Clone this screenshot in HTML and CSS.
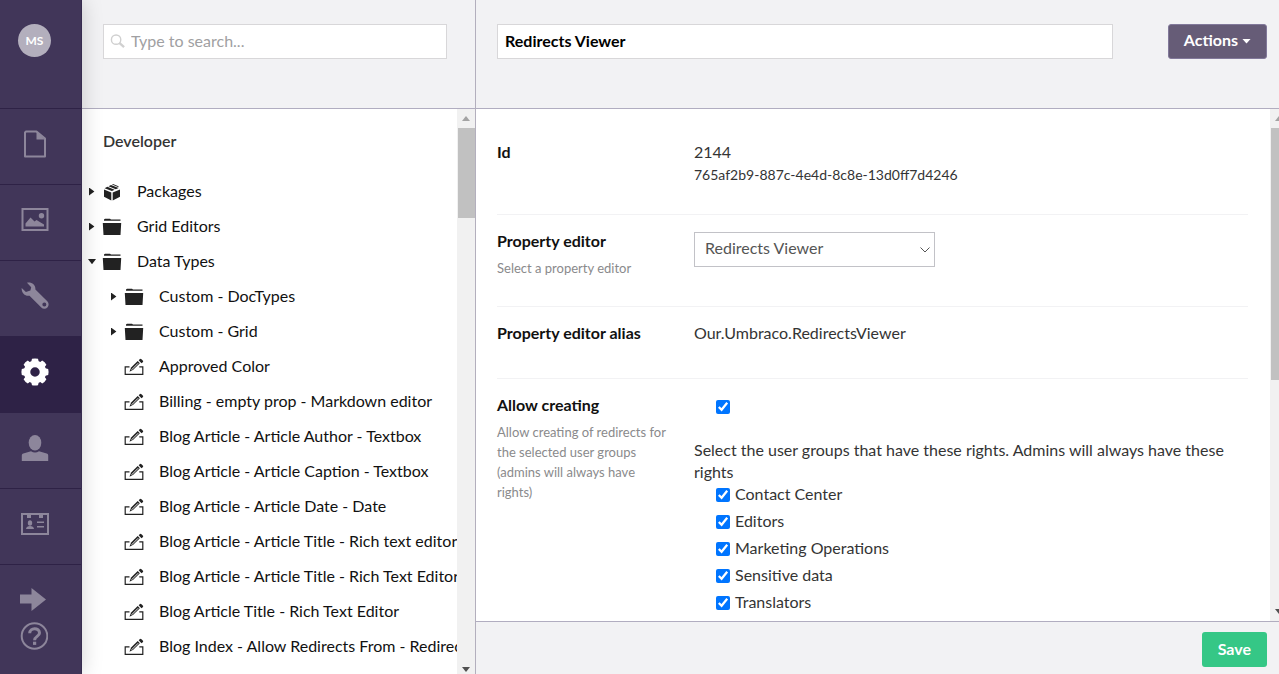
FILE: index.html
```html
<!DOCTYPE html>
<html lang="en">
<head>
<meta charset="utf-8">
<title>Redirects Viewer - Developer</title>
<link rel="stylesheet" href="styles.css">
</head>
<body>
<svg class="defs" aria-hidden="true">
  <symbol id="folder" viewBox="0 0 20 18"><path d="M2 3.500V1.500L3 .8h5l1 .8h9.500v1.200H2zM.8 5h18.400l-.7 12H1.500z"/></symbol>
  <symbol id="edit" viewBox="0 0 20 18"><path d="M5.500 8.800H1.200v7.500h17.600V8.800h-3.500" fill="none" stroke="currentColor" stroke-width="1.200"/><path d="M5.500 13.800l1.600-4.200 6.600-6.600 2.200 2.200-6.700 6.600z"/><path d="M7.600 11.800l6.600-6.600" stroke="#fff" stroke-width=".9"/><path d="M14.700 2.300l1.500-1.500 1.300.4 1.700 1.700-.2 1-1.500 1.300z"/></symbol>
</svg>
<div class="app">
  <nav class="rail" aria-label="Sections">
    <div class="rail-user"><button class="avatar" type="button">MS</button></div>
    <a class="rail-item" href="#" aria-label="Content"><svg viewBox="0 0 28 28"><path d="M5 1.500h10.500l8.500 7v18H4v-24z" fill="none" stroke="currentColor" stroke-width="2" stroke-linejoin="round"/><path d="M15.500 1v8.500H24z"/></svg></a>
    <a class="rail-item" href="#" aria-label="Media"><svg viewBox="0 0 28 28"><path d="M1.500 3h25v21h-25z" fill="none" stroke="currentColor" stroke-width="2"/><circle cx="20.500" cy="9.800" r="2.700"/><path d="M4.500 20.500v-3l5-6 4 4 2-1.500 7.500 4.500v2z"/></svg></a>
    <a class="rail-item" href="#" aria-label="Settings"><svg viewBox="0 0 28 28"><path fill-rule="evenodd" d="M6 .7c5-.8 8.800 2.400 8.400 6.900l11.900 11.700a4.300 4.300 0 0 1-6 6.200L8.500 13.700C4 14.500.2 11 .7 5.900l4.200 4.200 4.500-1.500.8-3.300zM23.300 20.500a2 2 0 1 0 .1 4 2 2 0 0 0-.1-4z"/></svg></a>
    <a class="rail-item active" href="#" aria-label="Developer" aria-current="page"><svg viewBox="0 0 28 28"><circle cx="14" cy="14" r="8" fill="none" stroke="currentColor" stroke-width="6.500"/><path d="M11 .8q3-.8 6 0l1 4h-8zM11 27.200q3 .8 6 0l1-4h-8zM.8 11q-.8 3 0 6l4 1v-8zM27.200 11q.8 3 0 6l-4 1v-8zM2.600 6.800q1.400-2.800 4.200-4.200l3.200 2.400-5 5zM25.400 6.800q-1.400-2.800-4.200-4.200L18 5l5 5zM2.600 21.200q1.400 2.800 4.200 4.200l3.200-2.400-5-5zM25.400 21.200q-1.400 2.800-4.200 4.200L18 23l5-5z"/></svg></a>
    <a class="rail-item" href="#" aria-label="Users"><svg viewBox="0 0 28 28"><ellipse cx="14" cy="8.700" rx="6.300" ry="7.700"/><path d="M.8 27v-5.500c0-1 .5-1.500 1.500-1.900L10 17.200c2.600 1.600 5.400 1.600 8 0l7.700 2.400c1 .4 1.500.9 1.500 1.900V27z"/></svg></a>
    <a class="rail-item" href="#" aria-label="Members"><svg viewBox="0 0 28 28"><path d="M1 4h26v20H1z" fill="none" stroke="currentColor" stroke-width="2"/><path d="M6 4h4v4H6zM18 4h4v4h-4z"/><ellipse cx="9" cy="13" rx="2.200" ry="2.800"/><path d="M5 19c0-2 2-3 4-3s4 1 4 3zM16 11.500h7v1.600h-7zM16 16h7v1.600h-7z"/></svg></a>
    <div class="rail-end">
      <a href="#" aria-label="More"><svg viewBox="0 0 28 28"><path d="M0 9.500h11.500V3L26 14.500 11.500 26v-7.500H0z"/></svg></a>
      <a href="#" aria-label="Help"><svg viewBox="0 0 28 28"><circle cx="14.500" cy="14" r="12.800" fill="none" stroke="currentColor" stroke-width="2"/><path d="M9.700 11.300c0-6.300 9.800-6 9.800-.4 0 3.600-4.900 3.400-4.900 7.300" fill="none" stroke="currentColor" stroke-width="3"/><path d="M13 19.700h3.200v3.200H13z"/></svg></a>
    </div>
  </nav>

  <aside class="tree-pane">
    <header class="pane-head">
      <label class="search"><svg viewBox="0 0 16 16" aria-hidden="true"><circle cx="6.500" cy="6" r="5" fill="none" stroke="currentColor" stroke-width="1.500"/><path d="M10 9.500l5 4.500" stroke="currentColor" stroke-width="2.500"/></svg><input type="text" placeholder="Type to search..." aria-label="Search"></label>
    </header>
    <div class="pane-body">
      <div class="tree">
        <h2>Developer</h2>
        <ul>
          <li><i class="caret"></i><svg class="icon" viewBox="0 0 20 18"><path d="M2 6.500l7.300 3v8L2 13.800zM18 6.500l-7.300 3v8l7.300-3.700zM2.600 5.200l2.800-1.400 7.200 3-2.700 1.200zM6.500 3.300L9 2l7.600 3-2.800 1.300zM10 1.500L11 1l5.500 2.300v.9z"/></svg><a href="#">Packages</a></li>
          <li><i class="caret"></i><svg class="icon"><use href="#folder"/></svg><a href="#">Grid Editors</a></li>
          <li><i class="caret open"></i><svg class="icon"><use href="#folder"/></svg><a href="#">Data Types</a></li>
          <li class="sub"><i class="caret"></i><svg class="icon"><use href="#folder"/></svg><a href="#">Custom - DocTypes</a></li>
          <li class="sub"><i class="caret"></i><svg class="icon"><use href="#folder"/></svg><a href="#">Custom - Grid</a></li>
          <li class="sub"><i class="caret none"></i><svg class="icon"><use href="#edit"/></svg><a href="#">Approved Color</a></li>
          <li class="sub"><i class="caret none"></i><svg class="icon"><use href="#edit"/></svg><a href="#">Billing - empty prop - Markdown editor</a></li>
          <li class="sub"><i class="caret none"></i><svg class="icon"><use href="#edit"/></svg><a href="#">Blog Article - Article Author - Textbox</a></li>
          <li class="sub"><i class="caret none"></i><svg class="icon"><use href="#edit"/></svg><a href="#">Blog Article - Article Caption - Textbox</a></li>
          <li class="sub"><i class="caret none"></i><svg class="icon"><use href="#edit"/></svg><a href="#">Blog Article - Article Date - Date</a></li>
          <li class="sub"><i class="caret none"></i><svg class="icon"><use href="#edit"/></svg><a href="#">Blog Article - Article Title - Rich text editor</a></li>
          <li class="sub"><i class="caret none"></i><svg class="icon"><use href="#edit"/></svg><a href="#">Blog Article - Article Title - Rich Text Editor</a></li>
          <li class="sub"><i class="caret none"></i><svg class="icon"><use href="#edit"/></svg><a href="#">Blog Article Title - Rich Text Editor</a></li>
          <li class="sub"><i class="caret none"></i><svg class="icon"><use href="#edit"/></svg><a href="#">Blog Index - Allow Redirects From - Redirects</a></li>
        </ul>
      </div>
      <div class="scrollbar" aria-hidden="true"><i class="arrow up"></i><i class="thumb"></i><i class="arrow down"></i></div>
    </div>
  </aside>

  <main class="editor">
    <header class="pane-head">
      <input class="title" type="text" value="Redirects Viewer" aria-label="Name">
      <button class="btn actions" type="button">Actions <i></i></button>
    </header>
    <div class="pane-body">
      <div class="form">
        <section class="row tall">
          <div class="label"><h3>Id</h3></div>
          <div class="value"><div>2144</div><small>765af2b9-887c-4e4d-8c8e-13d0ff7d4246</small></div>
        </section>
        <section class="row tall">
          <div class="label"><label for="editor">Property editor</label><p>Select a property editor</p></div>
          <div class="value"><div class="select"><select id="editor"><option>Redirects Viewer</option></select><svg viewBox="0 0 10 6" aria-hidden="true"><path d="M.5.5L5 5 9.500.5" fill="none" stroke="currentColor"/></svg></div></div>
        </section>
        <section class="row">
          <div class="label"><h3>Property editor alias</h3></div>
          <div class="value">Our.Umbraco.RedirectsViewer</div>
        </section>
        <section class="row">
          <div class="label"><label for="allow">Allow creating</label><p>Allow creating of redirects for the selected user groups (admins will always have rights)</p></div>
          <div class="value">
            <div class="allow"><input id="allow" type="checkbox" checked></div>
            <p>Select the user groups that have these rights. Admins will always have these rights</p>
            <div class="groups">
              <label><input type="checkbox" checked>Contact Center</label>
              <label><input type="checkbox" checked>Editors</label>
              <label><input type="checkbox" checked>Marketing Operations</label>
              <label><input type="checkbox" checked>Sensitive data</label>
              <label><input type="checkbox" checked>Translators</label>
            </div>
          </div>
        </section>
      </div>
      <div class="scrollbar cut" aria-hidden="true"><i class="arrow up"></i><i class="thumb long"></i><i class="arrow down"></i></div>
    </div>
    <footer><button class="btn save" type="button">Save</button></footer>
  </main>
</div>
</body>
</html>
```
FILE: styles.css
```css
* { box-sizing: border-box; margin: 0; padding: 0; }
body { font: 16px/22px Lato, "Liberation Sans", sans-serif; color: #343434; background: #fff; }
a { color: inherit; text-decoration: none; }
ul { list-style: none; }
input, select, button { font: inherit; color: inherit; }
svg { fill: currentColor; flex: none; }
.defs { position: absolute; width: 0; height: 0; }
.app { display: grid; grid-template-columns: 82px 394px minmax(0, 1fr); height: 100vh; overflow: hidden; }

.rail { display: flex; flex-direction: column; background: #413659; color: #8d869b; border-right: 1px solid #372c4f; z-index: 1; box-shadow: 0 0 20px rgba(0, 0, 0, .18); }
.rail-user { height: 108px; padding: 24px 18px; }
.avatar { width: 33px; height: 33px; border: 0; border-radius: 50%; background: #b3afbd; color: #fff; font-size: 12px; font-weight: 700; }
.rail-item { display: flex; align-items: center; height: 76px; padding: 0 0 6px 21px; border-top: 1px solid #2e2246; }
.rail svg { width: 28px; height: 28px; }
.rail-item.active { background: #2e2246; color: #fff; }
.rail-end { display: flex; flex-direction: column; gap: 9px; padding: 20px 20px 0; border-top: 1px solid #2e2246; flex: 1; }
.rail-end a, .rail-end svg { display: block; }

.tree-pane, .editor { display: flex; flex-direction: column; min-width: 0; min-height: 0; }
.tree-pane { border-right: 1px solid #b3afbd; }
.pane-head { display: flex; justify-content: space-between; align-items: flex-start; flex: none; height: 109px; padding: 24px 12px 0 21px; background: #f2f2f4; border-bottom: 1px solid #b1adc0; }
.tree-pane .pane-head { padding-right: 28px; }
.pane-body { display: flex; flex: 1; min-height: 0; overflow: hidden; }

.search { display: flex; align-items: center; flex: 1; height: 35px; padding: 0 6px; gap: 6px; background: #fff; border: 1px solid #d8d7d9; color: #d0d0d0; }
.search svg { width: 15px; height: 15px; }
.search input { flex: 1; min-width: 0; border: 0; outline: 0; background: none; color: #343434; padding-bottom: 2px; }
.search input::placeholder { color: #a0a0a2; opacity: 1; }

.tree { flex: 1; min-width: 0; overflow: hidden; padding-top: 21px; color: #111; }
.tree h2 { font-size: 16px; line-height: 22px; font-weight: 600; color: #343434; padding-left: 21px; margin-bottom: 21px; }
.tree li { display: flex; align-items: center; height: 35px; padding-left: 7px; white-space: nowrap; }
.tree li.sub { padding-left: 29px; }
.caret { flex: none; width: 6px; height: 8px; margin-top: 2px; background: #222; clip-path: polygon(0 0, 90% 50%, 0 100%); }
.caret.open { width: 8px; margin: 2px -1px 0; clip-path: polygon(0 20%, 100% 20%, 50% 85%); }
.caret.none { visibility: hidden; }
.icon { width: 20px; height: 18px; margin: 3px 15px 0 7px; color: #222; }

.scrollbar { display: flex; flex-direction: column; align-items: center; flex: none; width: 18px; background: #f1f1f1; padding: 7px 0 2px; }
.arrow { width: 8px; height: 5px; flex: none; background: #a3a3a3; clip-path: polygon(0 100%, 50% 0, 100% 100%); }
.arrow.down { margin-top: auto; background: #505050; clip-path: polygon(0 0, 100% 0, 50% 100%); }
.thumb { width: 17px; height: 90px; margin-top: 7px; background: #c1c1c1; flex: none; }
.thumb.long { height: 252px; }
.scrollbar.cut { margin-right: -9px; padding-bottom: 7px; }

.title { width: 80%; height: 35px; padding: 0 7px 3px; background: #fff; border: 1px solid #d8d7d9; color: #000; font-weight: 700; outline: 0; }
.btn { height: 35px; padding: 0 15px 3px; border: 0; border-radius: 3px; color: #fff; font-weight: 700; }
.actions { display: flex; align-items: center; gap: 4px; background: #665c77; border: 1px solid #82799a; }
.actions i { width: 9px; height: 5px; margin-top: 2px; background: #fff; clip-path: polygon(0 0, 100% 0, 50% 100%); }
.save { padding: 0 16px 2px; background: #35c786; }

.form { flex: 1; min-width: 0; padding: 17px 22px 0 21px; overflow: hidden; }
.row { display: flex; gap: 22px; min-height: 72px; padding: 15px 0; border-bottom: 1px solid #f2f2f4; }
.row.tall { min-height: 92px; }
.row.tall:first-child { min-height: 89px; }
.row:last-child { border: 0; }
.label { width: 175px; flex: none; }
.label h3, .label label { display: block; font-size: 16px; font-weight: 700; color: #111; }
.label p { font-size: 13px; line-height: 20px; color: #8a8a8c; margin-top: 6px; }
.value { flex: 1; min-width: 0; }
.value small { display: block; font-size: 14px; margin-top: 1px; }
.select { display: flex; align-items: center; width: 241px; margin-top: 2px; }
.select select { appearance: none; width: 100%; height: 35px; padding: 0 10px 3px; border: 1px solid #c2c2c7; background: #fff; color: #555; }
.select svg { width: 10px; height: 6px; margin-left: -15px; color: #555; pointer-events: none; }
input[type="checkbox"] { width: 14px; height: 14px; accent-color: #0075ff; flex: none; }
.allow { display: flex; align-items: center; height: 26px; padding-left: 22px; margin-bottom: 19px; }
.groups { display: flex; flex-direction: column; align-items: flex-start; gap: 5px; padding-left: 22px; }
.groups label { display: flex; align-items: center; gap: 5px; }
.groups input { margin-top: 2px; }

footer { display: flex; justify-content: flex-end; align-items: flex-start; flex: none; height: 53px; padding: 10px 12px 0; background: #f2f2f4; border-top: 1px solid #b1adc0; }
```
